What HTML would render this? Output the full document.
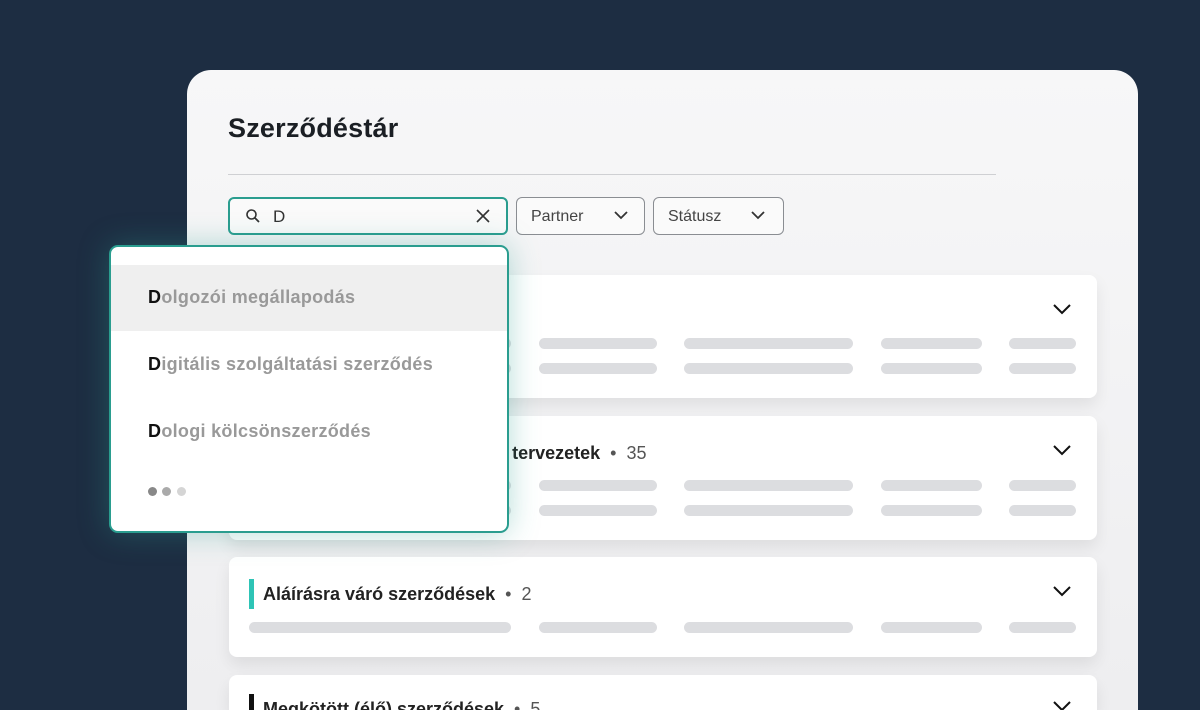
<!DOCTYPE html>
<html style="width:1200px;height:710px;overflow:hidden"><head><meta charset="utf-8"><style>
*{margin:0;padding:0;box-sizing:border-box}
body{width:1200px;height:710px;overflow:hidden;background:#1d2d42;font-family:"Liberation Sans",sans-serif;position:relative}
.panel{position:absolute;left:187px;top:70px;width:951px;height:640px;border-radius:24px 24px 0 0;background:linear-gradient(180deg,#f7f7f8,#eeeef0)}
h1{position:absolute;left:228px;top:113px;font-size:27px;font-weight:bold;color:#1b1f24;letter-spacing:0.2px}
.hr{position:absolute;left:228px;top:174px;width:768px;height:1px;background:#cfd0d3}
.search{position:absolute;left:228px;top:197px;width:280px;height:38px;border:2px solid #2a9d8f;border-radius:6px;background:#fafafa}
.sel{position:absolute;top:197px;height:38px;border:1px solid #8a8d92;border-radius:6px;background:#fafafa;font-size:16px;color:#444;padding:10px 14px}
.card{position:absolute;left:229px;width:868px;background:#fff;border-radius:8px;box-shadow:0 8px 16px rgba(0,0,0,.08)}
.bar{position:absolute;height:11px;border-radius:6px;background:#dcdde0}
.title{position:absolute;left:20px;top:26px;font-size:18px;font-weight:bold;color:#222;padding-left:14px;white-space:nowrap}
.title span{font-weight:normal;color:#555}
.mark{position:absolute;left:20px;top:22px;width:5px;height:30px}
.chev{position:absolute;right:26px;top:29px}
.dd{position:absolute;left:109px;top:245px;width:400px;height:288px;background:#fff;border:2px solid #2a9d8f;border-radius:9px;box-shadow:0 0 30px rgba(42,157,143,.35);overflow:hidden}
.item{position:absolute;left:0;width:396px;height:66px;font-size:18px;font-weight:bold;color:#999;padding:22px 0 0 37px;letter-spacing:.3px}
.item b{color:#111}
.dot{position:absolute;top:240px;width:9px;height:9px;border-radius:50%}
</style></head><body>
<div class="panel"></div>
<h1>Szerződéstár</h1>
<div class="hr"></div>
<div class="search">
<svg style="position:absolute;left:15px;top:9px" width="16" height="16" viewBox="0 0 16 16"><circle cx="6.5" cy="6.5" r="4.5" fill="none" stroke="#333" stroke-width="1.6"/><path d="M10 10l4 4" stroke="#333" stroke-width="1.8"/></svg>
<span style="position:absolute;left:43px;top:8px;font-size:17px;color:#333">D</span>
<svg style="position:absolute;right:16px;top:10px" width="14" height="14" viewBox="0 0 14 14"><path d="M1 1l12 12M13 1L1 13" stroke="#333" stroke-width="1.6"/></svg>
</div>
<div class="sel" style="left:516px;width:129px">Partner<svg style="position:absolute;right:16px;top:13px" width="14" height="9" viewBox="0 0 14 9"><path d="M1 1l6 6 6-6" fill="none" stroke="#333" stroke-width="1.8"/></svg></div>
<div class="sel" style="left:653px;width:131px">Státusz<svg style="position:absolute;right:18px;top:13px" width="14" height="9" viewBox="0 0 14 9"><path d="M1 1l6 6 6-6" fill="none" stroke="#333" stroke-width="1.8"/></svg></div>

<div class="card" style="top:275px;height:123px">
<svg class="chev" width="18" height="11" viewBox="0 0 18 11"><path d="M1 1l8 8 8-8" fill="none" stroke="#111" stroke-width="2"/></svg>
<div class="bar" style="left:20px;top:63px;width:262px"></div><div class="bar" style="left:310px;top:63px;width:118px"></div><div class="bar" style="left:455px;top:63px;width:169px"></div><div class="bar" style="left:652px;top:63px;width:101px"></div><div class="bar" style="left:780px;top:63px;width:67px"></div>
<div class="bar" style="left:20px;top:88px;width:262px"></div><div class="bar" style="left:310px;top:88px;width:118px"></div><div class="bar" style="left:455px;top:88px;width:169px"></div><div class="bar" style="left:652px;top:88px;width:101px"></div><div class="bar" style="left:780px;top:88px;width:67px"></div>
</div>
<div class="card" style="top:416px;height:124px">
<div class="title" style="left:20px;top:27px">Folyamatban lévő szerződés tervezetek <span>&nbsp;•&nbsp; 35</span></div>
<svg class="chev" width="18" height="11" viewBox="0 0 18 11"><path d="M1 1l8 8 8-8" fill="none" stroke="#111" stroke-width="2"/></svg>
<div class="bar" style="left:20px;top:64px;width:262px"></div><div class="bar" style="left:310px;top:64px;width:118px"></div><div class="bar" style="left:455px;top:64px;width:169px"></div><div class="bar" style="left:652px;top:64px;width:101px"></div><div class="bar" style="left:780px;top:64px;width:67px"></div>
<div class="bar" style="left:20px;top:89px;width:262px"></div><div class="bar" style="left:310px;top:89px;width:118px"></div><div class="bar" style="left:455px;top:89px;width:169px"></div><div class="bar" style="left:652px;top:89px;width:101px"></div><div class="bar" style="left:780px;top:89px;width:67px"></div>
</div>
<div class="card" style="top:557px;height:100px">
<div class="mark" style="background:#2ec4b6"></div>
<div class="title" style="top:27px">Aláírásra váró szerződések <span>&nbsp;•&nbsp; 2</span></div>
<svg class="chev" width="18" height="11" viewBox="0 0 18 11"><path d="M1 1l8 8 8-8" fill="none" stroke="#111" stroke-width="2"/></svg>
<div class="bar" style="left:20px;top:65px;width:262px"></div><div class="bar" style="left:310px;top:65px;width:118px"></div><div class="bar" style="left:455px;top:65px;width:169px"></div><div class="bar" style="left:652px;top:65px;width:101px"></div><div class="bar" style="left:780px;top:65px;width:67px"></div>
</div>
<div class="card" style="top:675px;height:35px;border-radius:8px 8px 0 0;overflow:hidden">
<div class="mark" style="background:#111;top:19px;height:16px"></div>
<div class="title" style="top:24px">Megkötött (élő) szerződések <span>&nbsp;•&nbsp; 5</span></div>
<svg class="chev" style="top:26px" width="18" height="9" viewBox="0 0 18 9"><path d="M1 1l8 8 8-8" fill="none" stroke="#111" stroke-width="2"/></svg>
</div>

<div class="dd">
<div class="item" style="top:18px;background:#efefef"><b>D</b>olgozói megállapodás</div>
<div class="item" style="top:85px"><b>D</b>igitális szolgáltatási szerződés</div>
<div class="item" style="top:152px"><b>D</b>ologi kölcsönszerződés</div>
<div class="dot" style="left:37px;background:#888"></div>
<div class="dot" style="left:51px;background:#aaa"></div>
<div class="dot" style="left:66px;background:#d5d5d5"></div>
</div>
</body></html>
